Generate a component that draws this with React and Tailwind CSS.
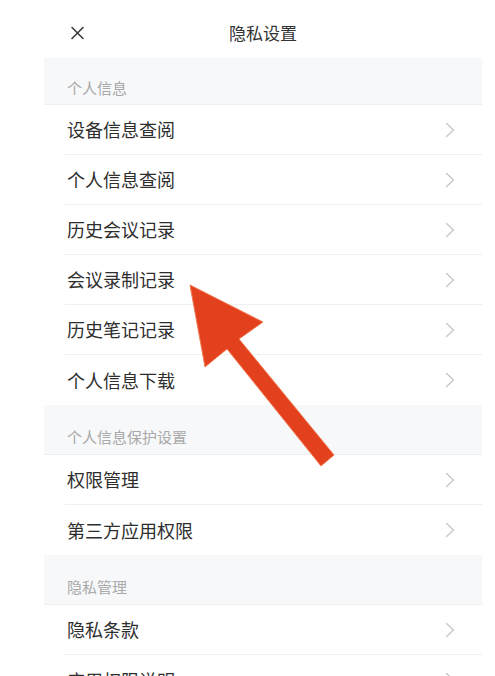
import React from 'react';

const sections = [
  {
    title: '个人信息',
    first: true,
    items: ['设备信息查阅', '个人信息查阅', '历史会议记录', '会议录制记录', '历史笔记记录', '个人信息下载'],
  },
  { title: '个人信息保护设置', items: ['权限管理', '第三方应用权限'] },
  { title: '隐私管理', items: ['隐私条款', '应用权限说明'] },
];

const Chevron = () => (
  <svg width="10" height="16" viewBox="0 0 10 16" fill="none" stroke="#c6c6c6" strokeWidth="1.3" strokeLinecap="round" strokeLinejoin="round">
    <path d="M1.5 1.5 L8.5 8 L1.5 14.5" />
  </svg>
);

const Row = ({ label, last }) => (
  <div className={`ml-[21px] flex h-[50px] items-center justify-between pl-[2px] pr-[27px] ${last ? '' : 'border-b border-[#eeeff1]'}`}>
    <span className="text-[18px] text-[#2e2e2e]">{label}</span>
    <Chevron />
  </div>
);

export default function App() {
  return (
    <div
      className="relative h-[676px] w-[495px] overflow-hidden bg-white pl-[44px] pr-[13px]"
      style={{ fontFamily: '"Noto Sans CJK SC", "Noto Sans", sans-serif' }}
    >
      <div className="relative flex h-[58px] items-center justify-center">
        <svg className="absolute left-[26px] top-[26px]" width="15" height="14" viewBox="0 0 15 14" stroke="#3a3a3a" strokeWidth="1.6" strokeLinecap="round">
          <path d="M2 1.5 L13 12.5 M13 1.5 L2 12.5" />
        </svg>
        <span className="mt-[8px] text-[17px] text-[#333333]">隐私设置</span>
      </div>

      {sections.map((section) => (
        <div key={section.title}>
          <div
            className={`flex items-end border-b border-[#eceef0] bg-[#f7f8fa] pl-[23px] ${section.first ? 'h-[47px] pb-[5px]' : 'h-[50px] pb-[6px]'}`}
          >
            <span className="text-[15px] text-[#a9a9a9]">{section.title}</span>
          </div>
          {section.items.map((item, i) => (
            <Row key={item} label={item} last={i === section.items.length - 1} />
          ))}
        </div>
      ))}

      <svg className="pointer-events-none absolute left-0 top-0" width="495" height="676" viewBox="0 0 495 676">
        <polygon
          points="190,285 263,322 239,339 334,455 321,466 227,349 205,367"
          fill="#e3411d"
          stroke="#f07a52"
          strokeWidth="1"
          strokeLinejoin="round"
        />
      </svg>
    </div>
  );
}
